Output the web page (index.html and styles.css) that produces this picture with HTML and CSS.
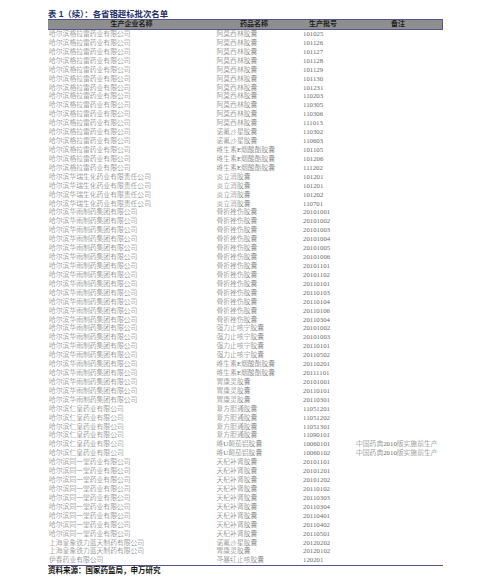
FILE: index.html
```html
<!DOCTYPE html>
<html lang="zh-CN">
<head>
<meta charset="utf-8">
<title>表1（续）：各省铬超标批次名单</title>
<link rel="stylesheet" href="styles.css">
</head>
<body>
<div class="page">
  <div class="title">表 1（续）：各省铬超标批次名单</div>
  <div class="table">
    <div class="row head">
      <div class="c1">生产企业名称</div>
      <div class="c2">药品名称</div>
      <div class="c3">生产批号</div>
      <div class="c4">备注</div>
    </div>
    <div class="body" id="rows"></div>
  </div>
  <div class="source">资料来源：国家药监局，申万研究</div>
</div>
<script src="script.js"></script>
</body>
</html>
```

FILE: script.js
```js
var A = "哈尔滨格拉雷药业有限公司";
var B = "哈尔滨华瑞生化药业有限责任公司";
var C = "哈尔滨华雨制药集团有限公司";
var D = "哈尔滨仁皇药业有限公司";
var E = "哈尔滨同一堂药业有限公司";
var F = "上海皇象铁力蓝天制药有限公司";
var N = "中国药典2010版实施前生产";
var data = [
  [A,"阿莫西林胶囊","101025"],[A,"阿莫西林胶囊","101126"],[A,"阿莫西林胶囊","101127"],
  [A,"阿莫西林胶囊","101128"],[A,"阿莫西林胶囊","101129"],[A,"阿莫西林胶囊","101130"],
  [A,"阿莫西林胶囊","101231"],[A,"阿莫西林胶囊","110203"],[A,"阿莫西林胶囊","110305"],
  [A,"阿莫西林胶囊","110306"],[A,"阿莫西林胶囊","111013"],[A,"诺氟沙星胶囊","110302"],
  [A,"诺氟沙星胶囊","110603"],[A,"维生素E烟酸酯胶囊","101105"],[A,"维生素E烟酸酯胶囊","101206"],
  [A,"维生素E烟酸酯胶囊","111202"],
  [B,"炎立消胶囊","101201"],[B,"炎立消胶囊","101201"],[B,"炎立消胶囊","101202"],[B,"炎立消胶囊","110701"],
  [C,"骨折挫伤胶囊","20101001"],[C,"骨折挫伤胶囊","20101002"],[C,"骨折挫伤胶囊","20101003"],
  [C,"骨折挫伤胶囊","20101004"],[C,"骨折挫伤胶囊","20101005"],[C,"骨折挫伤胶囊","20101006"],
  [C,"骨折挫伤胶囊","20101101"],[C,"骨折挫伤胶囊","20101102"],[C,"骨折挫伤胶囊","20110101"],
  [C,"骨折挫伤胶囊","20110103"],[C,"骨折挫伤胶囊","20110104"],[C,"骨折挫伤胶囊","20110106"],
  [C,"骨折挫伤胶囊","20110304"],
  [C,"强力止咳宁胶囊","20101002"],[C,"强力止咳宁胶囊","20101003"],[C,"强力止咳宁胶囊","20110101"],
  [C,"强力止咳宁胶囊","20110502"],
  [C,"维生素E烟酸酯胶囊","20110201"],[C,"维生素E烟酸酯胶囊","20111101"],
  [C,"胃康灵胶囊","20101001"],[C,"胃康灵胶囊","20110101"],[C,"胃康灵胶囊","20110301"],
  [D,"复方胆通胶囊","11051201"],[D,"复方胆通胶囊","11051202"],[D,"复方胆通胶囊","11051301"],
  [D,"复方胆通胶囊","11090101"],[D,"维U颠茄铝胶囊","10060101",N],[D,"维U颠茄铝胶囊","10060102",N],
  [E,"天杞补肾胶囊","20101101"],[E,"天杞补肾胶囊","20101201"],[E,"天杞补肾胶囊","20101202"],
  [E,"天杞补肾胶囊","20110102"],[E,"天杞补肾胶囊","20110303"],[E,"天杞补肾胶囊","20110304"],
  [E,"天杞补肾胶囊","20110401"],[E,"天杞补肾胶囊","20110402"],[E,"天杞补肾胶囊","20110501"],
  [F,"诺氟沙星胶囊","20120202"],[F,"胃康灵胶囊","20120102"],
  ["伊春药业有限公司","芩暴红止咳胶囊","120201"]
];
var html = "";
for (var i = 0; i < data.length; i++) {
  var r = data[i];
  html += '<div class="row"><div class="c1">' + r[0] + '</div><div class="c2">' + r[1] +
    '</div><div class="c3">' + r[2] + '</div><div class="c4">' + (r[3] || "") + '</div></div>';
}
document.getElementById("rows").innerHTML = html;
```

FILE: styles.css
```css
html, body {
  margin: 0;
  padding: 0;
  background: #ffffff;
}
.page {
  padding: 9px 0 0 48px;
  width: 395px;
  font-family: "Liberation Serif", "Noto Sans CJK SC", serif;
}
.title {
  font-family: "Liberation Sans", "Noto Sans CJK SC", sans-serif;
  font-weight: bold;
  font-size: 8.4px;
  line-height: 10px;
  height: 10px;
  color: #1f2f6a;
  white-space: nowrap;
}
.table {
  width: 395px;
  border-bottom: 1px solid #55558f;
}
.row {
  display: grid;
  grid-template-columns: 167px 78px 60px 90px;
  height: 8.93px;
  line-height: 8.93px;
  font-size: 6.8px;
  font-weight: 300;
  color: #6a6a6a;
  white-space: nowrap;
}
.row .c1 { padding-left: 1px; }
.row .c2 { padding-left: 1.5px; }
.row .c3 { padding-left: 10px; }
.row .c4 { padding-left: 3px; }
.row.head {
  height: 9px;
  line-height: 9px;
  background: #8e8e8e;
  border-top: 1px solid #55558f;
  border-bottom: 1px solid #55558f;
  border-right: 1px solid #55558f;
  font-weight: bold;
  font-size: 7px;
  color: #1e1e1e;
  text-align: center;
}
.row.head > div { padding-left: 0; }
.source {
  font-family: "Liberation Sans", "Noto Sans CJK SC", sans-serif;
  font-weight: bold;
  font-size: 7.5px;
  line-height: 9px;
  color: #111111;
  white-space: nowrap;
}
```
